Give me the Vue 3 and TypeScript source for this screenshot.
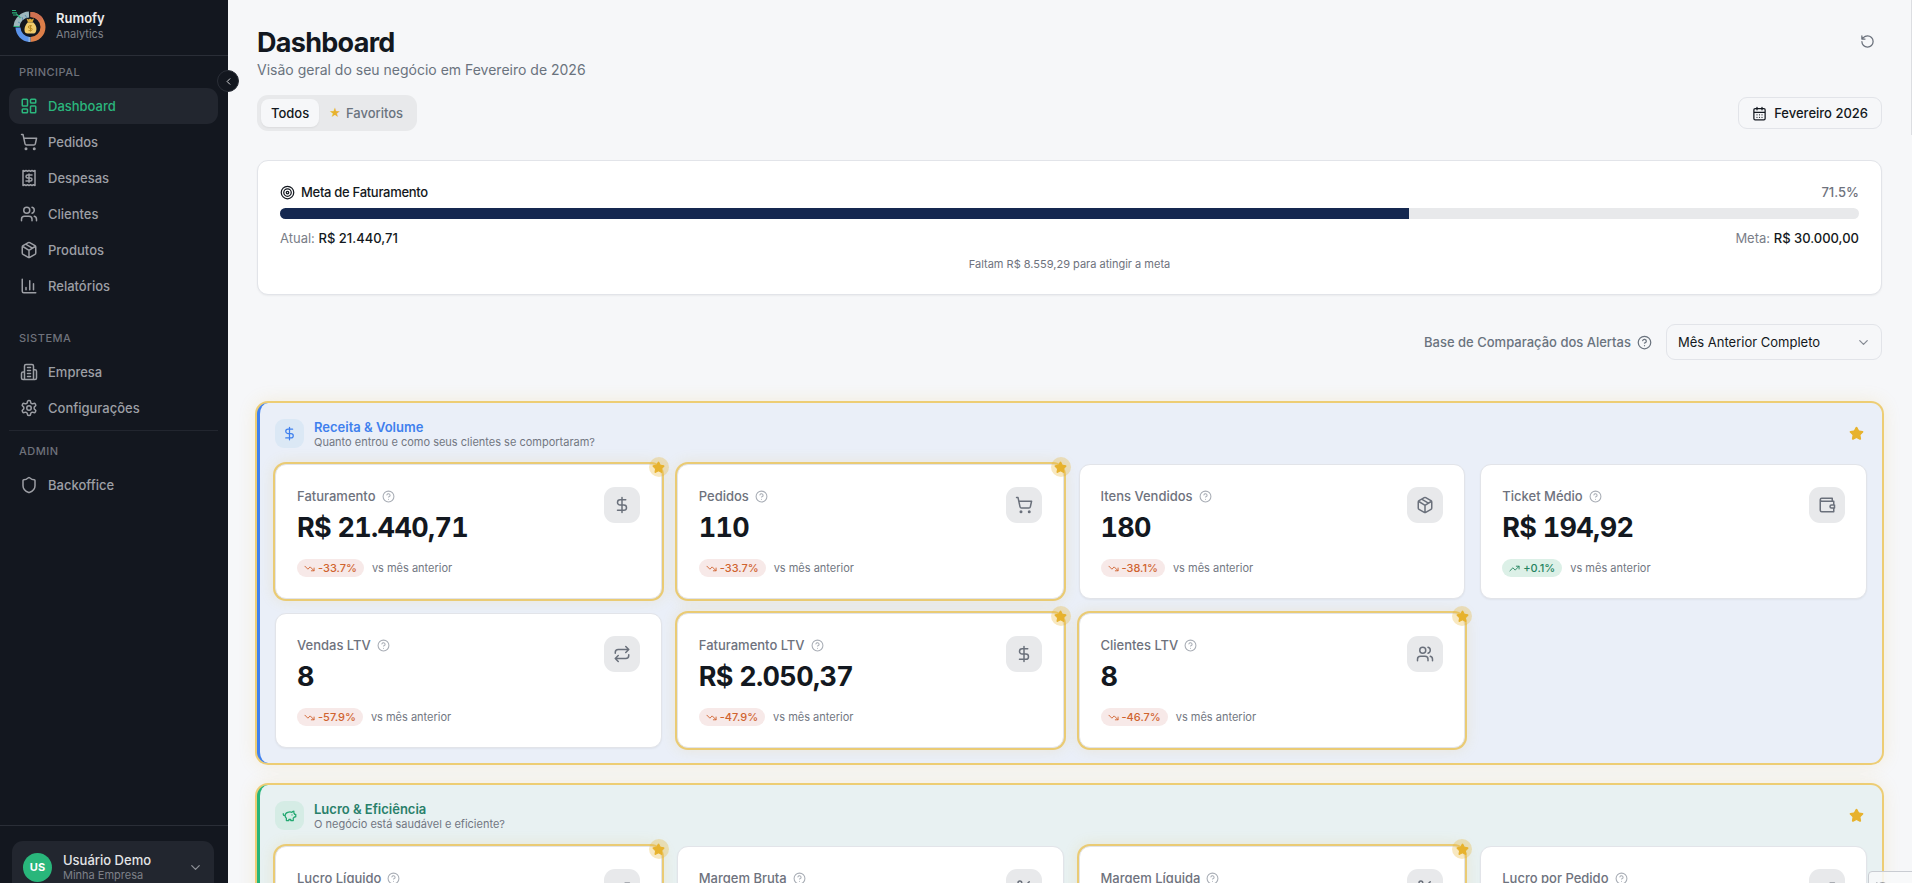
<script setup lang="ts">
import { ref } from 'vue'

interface Metric {
  label: string
  value: string
  change: string
  up?: boolean
  icon: string
  favorite?: boolean
}

interface Section {
  tone: string
  title: string
  subtitle: string
  icon: string
  metrics: Metric[]
}

const circle = (x: number, y: number, r: number): string =>
  `M${x - r} ${y}a${r} ${r} 0 1 0 ${2 * r} 0a${r} ${r} 0 1 0 ${-2 * r} 0`

const icons: Record<string, string> = {
  dashboard:
    'M4 3h5a1 1 0 0 1 1 1v7a1 1 0 0 1-1 1H4a1 1 0 0 1-1-1V4a1 1 0 0 1 1-1zM15 3h5a1 1 0 0 1 1 1v3a1 1 0 0 1-1 1h-5a1 1 0 0 1-1-1V4a1 1 0 0 1 1-1zM15 12h5a1 1 0 0 1 1 1v7a1 1 0 0 1-1 1h-5a1 1 0 0 1-1-1v-7a1 1 0 0 1 1-1zM4 16h5a1 1 0 0 1 1 1v3a1 1 0 0 1-1 1H4a1 1 0 0 1-1-1v-3a1 1 0 0 1 1-1z',
  cart:
    circle(8, 21, 1) + circle(19, 21, 1) +
    'M2.05 2.05h2l2.66 12.42a2 2 0 0 0 2 1.58h9.78a2 2 0 0 0 1.95-1.57l1.65-7.43H5.12',
  receipt:
    'M4 2v20l2-1 2 1 2-1 2 1 2-1 2 1 2-1 2 1V2l-2 1-2-1-2 1-2-1-2 1-2-1-2 1ZM16 8h-6a2 2 0 1 0 0 4h4a2 2 0 1 1 0 4H8M12 17.5v-11',
  users:
    'M16 21v-2a4 4 0 0 0-4-4H6a4 4 0 0 0-4 4v2M22 21v-2a4 4 0 0 0-3-3.87M16 3.13a4 4 0 0 1 0 7.75' + circle(9, 7, 4),
  box:
    'M11 21.73a2 2 0 0 0 2 0l7-4A2 2 0 0 0 21 16V8a2 2 0 0 0-1-1.73l-7-4a2 2 0 0 0-2 0l-7 4A2 2 0 0 0 3 8v8a2 2 0 0 0 1 1.73zM12 22V12M3.3 7l7.703 4.734a2 2 0 0 0 1.994 0L20.7 7M7.5 4.27l9 5.15',
  chart: 'M3 3v16a2 2 0 0 0 2 2h16M18 17V9M13 17V5M8 17v-3',
  building:
    'M6 22V4a2 2 0 0 1 2-2h8a2 2 0 0 1 2 2v18ZM6 12H4a2 2 0 0 0-2 2v6a2 2 0 0 0 2 2h2M18 9h2a2 2 0 0 1 2 2v9a2 2 0 0 1-2 2h-2M10 6h4M10 10h4M10 14h4M10 18h4',
  settings:
    'M12.22 2h-.44a2 2 0 0 0-2 2v.18a2 2 0 0 1-1 1.73l-.43.25a2 2 0 0 1-2 0l-.15-.08a2 2 0 0 0-2.73.73l-.22.38a2 2 0 0 0 .73 2.73l.15.1a2 2 0 0 1 1 1.72v.51a2 2 0 0 1-1 1.74l-.15.09a2 2 0 0 0-.73 2.73l.22.38a2 2 0 0 0 2.73.73l.15-.08a2 2 0 0 1 2 0l.43.25a2 2 0 0 1 1 1.73V20a2 2 0 0 0 2 2h.44a2 2 0 0 0 2-2v-.18a2 2 0 0 1 1-1.73l.43-.25a2 2 0 0 1 2 0l.15.08a2 2 0 0 0 2.73-.73l.22-.39a2 2 0 0 0-.73-2.73l-.15-.08a2 2 0 0 1-1-1.74v-.5a2 2 0 0 1 1-1.74l.15-.09a2 2 0 0 0 .73-2.73l-.22-.38a2 2 0 0 0-2.73-.73l-.15.08a2 2 0 0 1-2 0l-.43-.25a2 2 0 0 1-1-1.73V4a2 2 0 0 0-2-2z' +
    circle(12, 12, 3),
  shield:
    'M20 13c0 5-3.5 7.5-7.66 8.95a1 1 0 0 1-.67-.01C7.5 20.5 4 18 4 13V6a1 1 0 0 1 1-1c2 0 4.5-1.2 6.24-2.72a1.17 1.17 0 0 1 1.52 0C14.51 3.81 17 5 19 5a1 1 0 0 1 1 1z',
  target: circle(12, 12, 10) + circle(12, 12, 6) + circle(12, 12, 2),
  calendar:
    'M8 2v4M16 2v4M5 4h14a2 2 0 0 1 2 2v14a2 2 0 0 1-2 2H5a2 2 0 0 1-2-2V6a2 2 0 0 1 2-2zM3 10h18M8 14h.01M12 14h.01M16 14h.01M8 18h.01M12 18h.01M16 18h.01',
  refresh: 'M3 12a9 9 0 1 0 9-9 9.75 9.75 0 0 0-6.74 2.74L3 8M3 3v5h5',
  help: circle(12, 12, 10) + 'M9.09 9a3 3 0 0 1 5.83 1c0 2-3 3-3 3M12 17h.01',
  dollar: 'M12 2v20M17 5H9.5a3.5 3.5 0 0 0 0 7h5a3.5 3.5 0 0 1 0 7H6',
  wallet: 'M21 12V7H5a2 2 0 0 1 0-4h14v4M3 5v14a2 2 0 0 0 2 2h16v-5M18 12a2 2 0 0 0 0 4h4v-4Z',
  repeat: 'M17 2l4 4-4 4M3 11v-1a4 4 0 0 1 4-4h14M7 22l-4-4 4-4M21 13v1a4 4 0 0 1-4 4H3',
  down: 'M22 17 13.5 8.5 8.5 13.5 2 7M16 17H22V11',
  up: 'M22 7 13.5 15.5 8.5 10.5 2 17M16 7H22V13',
  piggy:
    'M19 5c-1.5 0-2.8 1.4-3 2-3.5-1.5-11-.3-11 5 0 1.8 0 3 2 4.5V20h4v-2h3v2h4v-4c1-.5 1.7-1 2-2h2v-4h-2c0-1-.5-1.5-1-2V5zM2 9v1c0 1.1.9 2 2 2h1M16 11h.01',
  percent: 'M19 5 5 19' + circle(6.5, 6.5, 2.5) + circle(17.5, 17.5, 2.5),
  star:
    'M11.525 2.295a.53.53 0 0 1 .95 0l2.31 4.679a2.123 2.123 0 0 0 1.595 1.16l5.166.756a.53.53 0 0 1 .294.904l-3.736 3.638a2.123 2.123 0 0 0-.611 1.878l.882 5.14a.53.53 0 0 1-.771.56l-4.618-2.428a2.122 2.122 0 0 0-1.973 0L6.396 21.01a.53.53 0 0 1-.77-.56l.881-5.139a2.122 2.122 0 0 0-.611-1.879L2.16 9.795a.53.53 0 0 1 .294-.906l5.165-.755a2.122 2.122 0 0 0 1.597-1.16z',
  chevronDown: 'M6 9l6 6 6-6',
  chevronLeft: 'M15 18l-6-6 6-6',
}

const groups = [
  {
    title: 'Principal',
    items: [
      { label: 'Dashboard', icon: 'dashboard' },
      { label: 'Pedidos', icon: 'cart' },
      { label: 'Despesas', icon: 'receipt' },
      { label: 'Clientes', icon: 'users' },
      { label: 'Produtos', icon: 'box' },
      { label: 'Relatórios', icon: 'chart' },
    ],
  },
  {
    title: 'Sistema',
    items: [
      { label: 'Empresa', icon: 'building' },
      { label: 'Configurações', icon: 'settings' },
    ],
  },
  { title: 'Admin', items: [{ label: 'Backoffice', icon: 'shield' }] },
]

const sections: Section[] = [
  {
    tone: 'blue',
    title: 'Receita & Volume',
    subtitle: 'Quanto entrou e como seus clientes se comportaram?',
    icon: 'dollar',
    metrics: [
      { label: 'Faturamento', value: 'R$ 21.440,71', change: '-33.7%', icon: 'dollar', favorite: true },
      { label: 'Pedidos', value: '110', change: '-33.7%', icon: 'cart', favorite: true },
      { label: 'Itens Vendidos', value: '180', change: '-38.1%', icon: 'box' },
      { label: 'Ticket Médio', value: 'R$ 194,92', change: '+0.1%', up: true, icon: 'wallet' },
      { label: 'Vendas LTV', value: '8', change: '-57.9%', icon: 'repeat' },
      { label: 'Faturamento LTV', value: 'R$ 2.050,37', change: '-47.9%', icon: 'dollar', favorite: true },
      { label: 'Clientes LTV', value: '8', change: '-46.7%', icon: 'users', favorite: true },
    ],
  },
  {
    tone: 'green',
    title: 'Lucro & Eficiência',
    subtitle: 'O negócio está saudável e eficiente?',
    icon: 'piggy',
    metrics: [
      { label: 'Lucro Líquido', value: '', change: '', icon: 'up', favorite: true },
      { label: 'Margem Bruta', value: '', change: '', icon: 'percent' },
      { label: 'Margem Líquida', value: '', change: '', icon: 'percent', favorite: true },
      { label: 'Lucro por Pedido', value: '', change: '', icon: 'up' },
    ],
  },
]

const active = ref('Dashboard')
const tab = ref('Todos')
const base = ref('Mês Anterior Completo')
const progress = 71.5
</script>

<template>
  <div class="shell">
    <aside class="sidebar">
      <div class="brand">
        <svg class="logo" viewBox="0 0 36 36" aria-hidden="true">
          <g fill="none" stroke-width="5">
            <path d="M18.500 5.500A12.500 12.500 0 0 1 18.500 30.500" stroke="#dd7f49" />
            <path d="M18.500 5.500A12.500 12.500 0 0 1 29 11" stroke="#cf7151" />
            <path d="M17.500 30.500A12.500 12.500 0 0 1 6 18.500" stroke="#5b93ea" />
            <path d="M4.500 17.500A13 13 0 0 1 17 5.500" stroke="#9db7bd" stroke-width="6" />
            <path d="M17.500 28v5" stroke="#8fb2dc" stroke-width="2" />
          </g>
          <path d="M0 1.500h4M0 3.800h5M1 6h4M4.500 5l4 4M1.500 17.500h6" stroke="#2bb27b" stroke-width="1.200" fill="none" />
          <path d="M10 8l1 3M6 13l2 1M13 6l2 3" stroke="#5c8fb0" stroke-width="1" />
          <path d="M14.500 9.500l2 1 1.500-1 1.500 1 2.500-1-1.500 4H16z" fill="#dba93b" />
          <path d="M15.500 13.500h6c3 3 3.500 6 2.500 9-.5 1.500-1.500 2-2.500 2h-6c-1.500 0-2.500-.7-2.800-2-.7-3 .3-6 2.800-9z" fill="#f0cb6c" />
          <path d="M20 16.800h-2.400a1.200 1.200 0 0 0 0 2.400H19a1.200 1.200 0 0 1 0 2.400h-2.500M18.500 16v6.600" stroke="#b98a22" stroke-width="1" fill="none" />
        </svg>
        <div>
          <div class="brand-name">Rumofy</div>
          <div class="brand-sub">Analytics</div>
        </div>
      </div>
      <nav class="nav">
        <div v-for="g in groups" :key="g.title" class="group">
          <div class="group-title">{{ g.title }}</div>
          <a
            v-for="item in g.items"
            :key="item.label"
            href="#"
            class="nav-item"
            :class="{ active: active === item.label }"
            @click.prevent="active = item.label"
          >
            <svg class="icon s18" viewBox="0 0 24 24"><path :d="icons[item.icon]" /></svg>
            <span>{{ item.label }}</span>
          </a>
        </div>
      </nav>
      <div class="sidebar-foot">
        <button class="user" type="button">
          <span class="avatar">US</span>
          <span class="user-text">
            <span class="user-name">Usuário Demo</span>
            <span class="user-org">Minha Empresa</span>
          </span>
          <svg class="icon s15" viewBox="0 0 24 24"><path :d="icons.chevronDown" /></svg>
        </button>
      </div>
      <button class="collapse" type="button" aria-label="Recolher menu">
        <svg class="icon s11" viewBox="0 0 24 24"><path :d="icons.chevronLeft" /></svg>
      </button>
    </aside>

    <main class="main">
      <header class="page-head">
        <div>
          <h1>Dashboard</h1>
          <p class="lead">Visão geral do seu negócio em Fevereiro de 2026</p>
        </div>
        <button class="refresh" type="button" aria-label="Atualizar">
          <svg class="icon s15" viewBox="0 0 24 24"><path :d="icons.refresh" /></svg>
        </button>
      </header>

      <div class="toolbar">
        <div class="tabs">
          <button type="button" class="tab" :class="{ on: tab === 'Todos' }" @click="tab = 'Todos'">Todos</button>
          <button type="button" class="tab" :class="{ on: tab === 'Favoritos' }" @click="tab = 'Favoritos'">
            <span class="tab-star">★</span>Favoritos
          </button>
        </div>
        <button type="button" class="date">
          <svg class="icon s15" viewBox="0 0 24 24"><path :d="icons.calendar" /></svg>Fevereiro 2026
        </button>
      </div>

      <section class="goal">
        <div class="goal-row">
          <span class="goal-title">
            <svg class="icon s15" viewBox="0 0 24 24"><path :d="icons.target" /></svg>Meta de Faturamento
          </span>
          <span class="goal-pct">{{ progress }}%</span>
        </div>
        <div class="bar"><div class="bar-fill" :style="{ width: progress + '%' }"></div></div>
        <div class="goal-row amounts">
          <span>Atual: <b>R$ 21.440,71</b></span>
          <span>Meta: <b>R$ 30.000,00</b></span>
        </div>
        <p class="remaining">Faltam R$ 8.559,29 para atingir a meta</p>
      </section>

      <div class="compare">
        <label for="base">Base de Comparação dos Alertas</label>
        <svg class="icon s15" viewBox="0 0 24 24"><path :d="icons.help" /></svg>
        <div class="select">
          <select id="base" v-model="base">
            <option>Mês Anterior Completo</option>
            <option>Mesmo Período do Mês Anterior</option>
          </select>
          <svg class="icon s15 select-arrow" viewBox="0 0 24 24"><path :d="icons.chevronDown" /></svg>
        </div>
      </div>

      <section v-for="s in sections" :key="s.title" class="section" :class="s.tone">
        <div class="section-head">
          <span class="section-icon">
            <svg class="icon s15" viewBox="0 0 24 24"><path :d="icons[s.icon]" /></svg>
          </span>
          <div class="section-text">
            <h2>{{ s.title }}</h2>
            <p>{{ s.subtitle }}</p>
          </div>
          <button class="fav" type="button" aria-label="Favorito">
            <svg class="icon star s15" viewBox="0 0 24 24"><path :d="icons.star" /></svg>
          </button>
        </div>
        <div class="cards">
          <article v-for="m in s.metrics" :key="m.label" class="card" :class="{ favorite: m.favorite }">
            <div class="card-body">
              <div class="card-label">
                {{ m.label }}
                <svg class="icon s13 hint" viewBox="0 0 24 24"><path :d="icons.help" /></svg>
              </div>
              <div class="card-value">{{ m.value }}</div>
              <div class="card-trend">
                <template v-if="m.change">
                  <span class="pill" :class="{ up: m.up }">
                    <svg class="icon s11" viewBox="0 0 24 24"><path :d="m.up ? icons.up : icons.down" /></svg>{{ m.change }}
                  </span>
                  <span class="versus">vs mês anterior</span>
                </template>
              </div>
            </div>
            <span class="card-icon">
              <svg class="icon s18" viewBox="0 0 24 24"><path :d="icons[m.icon]" /></svg>
            </span>
            <span v-if="m.favorite" class="badge">
              <svg class="icon star s13" viewBox="0 0 24 24"><path :d="icons.star" /></svg>
            </span>
          </article>
        </div>
      </section>
    </main>

    <div class="scroll-mark"></div>
    <div class="corner">
      <svg class="icon s15" viewBox="0 0 24 24"><path :d="icons.refresh" /></svg>
    </div>
  </div>
</template>

<style>
body {
  margin: 0;
  background: #f6f7f9;
}
</style>

<style scoped>
* {
  box-sizing: border-box;
}
.shell {
  display: flex;
  align-items: flex-start;
  height: 100vh;
  overflow: hidden;
  position: relative;
  background: #f6f7f9;
  color: #131820;
  font-family: Inter, "Liberation Sans", sans-serif;
  font-size: 13px;
  line-height: 18px;
}
button,
select {
  font: inherit;
  color: inherit;
  margin: 0;
  padding: 0;
  border: 0;
  background: none;
  cursor: pointer;
}
h1,
h2,
p {
  margin: 0;
}
.icon {
  display: block;
  flex: none;
  fill: none;
  stroke: currentColor;
  stroke-width: 2;
  stroke-linecap: round;
  stroke-linejoin: round;
}
.s11 { width: 11px; height: 11px; }
.s13 { width: 13px; height: 13px; }
.s15 { width: 15px; height: 15px; }
.s18 { width: 18px; height: 18px; }
.star {
  fill: #e7b22d;
  stroke: #e7b22d;
}

.sidebar {
  position: relative;
  z-index: 2;
  flex: none;
  display: flex;
  flex-direction: column;
  width: 228px;
  height: calc(100vh + 22px);
  background: #13171f;
}
.brand {
  display: flex;
  gap: 8px;
  height: 56px;
  padding: 9px 12px;
  border-bottom: 1px solid #2a2e37;
}
.logo {
  width: 36px;
  height: 36px;
}
.brand-name {
  color: #ebecee;
  font-weight: 600;
  line-height: 18px;
}
.brand-sub {
  color: #7d8088;
  font-size: 11px;
  line-height: 14px;
}
.nav {
  flex: 1;
  padding: 1px 10px 0 9px;
}
.group-title {
  height: 31px;
  padding: 6px 10px 0;
  color: #6f727b;
  font-size: 11px;
  font-weight: 500;
  letter-spacing: 0.5px;
  text-transform: uppercase;
}
.group {
  padding-bottom: 19px;
}
.group:nth-child(2) {
  padding-bottom: 4px;
}
.group:nth-child(3) {
  padding-top: 5px;
  border-top: 1px solid #22262f;
}
.nav-item {
  display: flex;
  align-items: center;
  gap: 10px;
  height: 36px;
  padding: 0 11px;
  border-radius: 11px;
  color: #9d9fa5;
  font-weight: 500;
  text-decoration: none;
}
.nav-item.active {
  background: #22262f;
  color: #2bb67d;
}
.sidebar-foot {
  padding: 15px 14px 12px 12px;
  border-top: 1px solid #2a2e37;
}
.user {
  display: flex;
  align-items: center;
  width: 100%;
  height: 52px;
  padding: 0 11px;
  gap: 11px;
  border-radius: 11px;
  background: #22262f;
  text-align: left;
}
.avatar {
  display: grid;
  place-items: center;
  width: 29px;
  height: 29px;
  border-radius: 50%;
  background: #29b67b;
  color: #fff;
  font-size: 11px;
  font-weight: 700;
}
.user-text {
  flex: 1;
  display: flex;
  flex-direction: column;
}
.user-name {
  color: #e3e4e6;
  font-weight: 500;
  line-height: 16px;
}
.user-org {
  color: #7d8088;
  font-size: 11px;
  line-height: 14px;
}
.user .icon {
  color: #8d9097;
}
.collapse {
  position: absolute;
  top: 70px;
  right: -11px;
  display: grid;
  place-items: center;
  width: 22px;
  height: 22px;
  border: 1px solid #2a2e37;
  border-radius: 50%;
  background: #13171f;
  color: #e3e4e6;
}

.main {
  flex: 1;
  min-width: 0;
  height: 100vh;
  padding: 27px 30px 30px 29px;
  overflow-y: auto;
  scrollbar-width: none;
}
.page-head {
  display: flex;
  justify-content: space-between;
  align-items: flex-start;
}
h1 {
  font-size: 27px;
  font-weight: 700;
  line-height: 32px;
  letter-spacing: -0.7px;
}
.lead {
  color: #6a737e;
  font-size: 14px;
  line-height: 22px;
}
.refresh {
  display: grid;
  place-items: center;
  width: 29px;
  height: 29px;
  color: #6a707b;
}
.toolbar {
  display: flex;
  justify-content: space-between;
  align-items: center;
  margin-top: 14px;
}
.tabs {
  display: flex;
  height: 36px;
  padding: 4px;
  border-radius: 11px;
  background: #e8e9eb;
}
.tab {
  display: flex;
  align-items: center;
  gap: 5px;
  padding: 0 10px;
  border-radius: 8px;
  color: #6a737e;
  font-weight: 500;
}
.tab.on {
  background: #f6f7f9;
  color: #131820;
  box-shadow: 0 1px 2px rgba(0, 0, 0, 0.06);
}
.tab-star {
  color: #e7b22d;
  font-family: "DejaVu Sans", sans-serif;
  font-size: 13px;
}
.date {
  display: flex;
  align-items: center;
  gap: 7px;
  height: 32px;
  padding: 0 13px;
  border: 1px solid #e2e4e9;
  border-radius: 9px;
  font-weight: 500;
}
.goal {
  margin-top: 29px;
  padding: 22px;
  border: 1px solid #e2e4e9;
  border-radius: 11px;
  background: #fff;
  box-shadow: 0 1px 2px rgba(0, 0, 0, 0.05);
}
.goal-row {
  display: flex;
  justify-content: space-between;
  align-items: center;
}
.goal-title {
  display: flex;
  align-items: center;
  gap: 6px;
  font-weight: 500;
  letter-spacing: -0.3px;
}
.goal-pct {
  color: #6e727d;
  font-weight: 500;
}
.bar {
  height: 11px;
  margin: 7px 0 10px;
  border-radius: 6px;
  background: #e8e9eb;
  overflow: hidden;
}
.bar-fill {
  height: 100%;
  background: #152850;
}
.amounts {
  color: #7a7e88;
}
.amounts b {
  color: #131820;
  font-weight: 500;
}
.remaining {
  margin-top: 9px;
  color: #6e727d;
  font-size: 11px;
  line-height: 16px;
  text-align: center;
}
.compare {
  display: flex;
  align-items: center;
  justify-content: flex-end;
  margin: 29px 0 43px;
  color: #6a737e;
  font-weight: 500;
}
.compare > .icon {
  margin: 0 14px 0 6px;
}
.select {
  position: relative;
  width: 216px;
}
.select select {
  width: 100%;
  height: 36px;
  padding: 0 36px 0 11px;
  border: 1px solid #e2e4e9;
  border-radius: 9px;
  color: #131820;
  font-weight: 400;
  appearance: none;
}
.select-arrow {
  position: absolute;
  top: 11px;
  right: 11px;
  color: #868b94;
  pointer-events: none;
}

.section {
  margin-bottom: 22px;
  padding: 16px 15px 15px;
  border-left: 3px solid;
  border-radius: 11px;
  box-shadow: 0 0 0 2px #edcd74, 0 0 18px 1px rgba(231, 178, 45, 0.17);
}
.section.blue {
  border-color: #3f80ee;
  background: #eaeff8;
}
.section.green {
  border-color: #27b57a;
  background: #e8f1f2;
}
.section-head {
  display: flex;
  align-items: center;
  height: 29px;
  margin-bottom: 16px;
}
.section-icon {
  display: grid;
  place-items: center;
  width: 29px;
  height: 29px;
  border-radius: 9px;
}
.blue .section-icon {
  background: #dbe8f5;
  color: #3f80ee;
}
.green .section-icon {
  background: #d5ece5;
  color: #22a871;
}
.section-text {
  flex: 1;
  margin-left: 10px;
}
.section h2 {
  font-size: 13px;
  font-weight: 600;
  line-height: 16px;
}
.blue h2 {
  color: #3f80ee;
}
.green h2 {
  color: #28806a;
}
.section p {
  color: #727782;
  font-size: 11px;
  line-height: 14px;
}
.fav {
  padding: 3px;
}
.cards {
  display: grid;
  grid-template-columns: repeat(4, 1fr);
  gap: 14px 15px;
}
.card {
  position: relative;
  display: flex;
  justify-content: space-between;
  padding: 22px 21px 21px;
  border: 1px solid #e2e4e9;
  border-radius: 11px;
  background: #fff;
  box-shadow: 0 1px 2px rgba(0, 0, 0, 0.05);
}
.card.favorite {
  box-shadow: 0 0 0 2px #eacb74, 0 0 14px 2px rgba(231, 178, 45, 0.15);
}
.card-label {
  display: flex;
  align-items: center;
  gap: 6px;
  color: #6e727d;
  font-weight: 500;
}
.hint {
  color: #a9aeb6;
}
.card-value {
  height: 36px;
  margin: 5px 0 13px;
  font-size: 27px;
  font-weight: 700;
  font-variant-numeric: tabular-nums;
  line-height: 36px;
  letter-spacing: -0.7px;
}
.card-trend {
  display: flex;
  align-items: center;
  gap: 8px;
  height: 18px;
  color: #727782;
  font-size: 11px;
}
.pill {
  display: flex;
  align-items: center;
  gap: 3px;
  height: 18px;
  padding: 0 7px;
  border-radius: 9px;
  background: #f7e9e8;
  color: #d0632f;
  font-weight: 500;
}
.pill.up {
  background: #dcf0e7;
  color: #24835f;
}
.card-icon {
  display: grid;
  place-items: center;
  width: 36px;
  height: 36px;
  border-radius: 11px;
  background: #e8e9eb;
  color: #6a707b;
}
.badge {
  position: absolute;
  top: -8px;
  right: -8px;
  display: grid;
  place-items: center;
  width: 20px;
  height: 20px;
  border-radius: 50%;
  background: rgba(231, 178, 45, 0.3);
}
.scroll-mark {
  position: absolute;
  top: 0;
  right: 0;
  width: 1px;
  height: 135px;
  background: #dcdee2;
}
.corner {
  position: absolute;
  right: -4px;
  bottom: -24px;
  z-index: 3;
  width: 48px;
  height: 36px;
  padding: 9px 6px;
  border: 1px solid #c9ccd2;
  border-radius: 4px;
  background: rgba(248, 249, 250, 0.85);
  color: #7a7e88;
}
</style>
